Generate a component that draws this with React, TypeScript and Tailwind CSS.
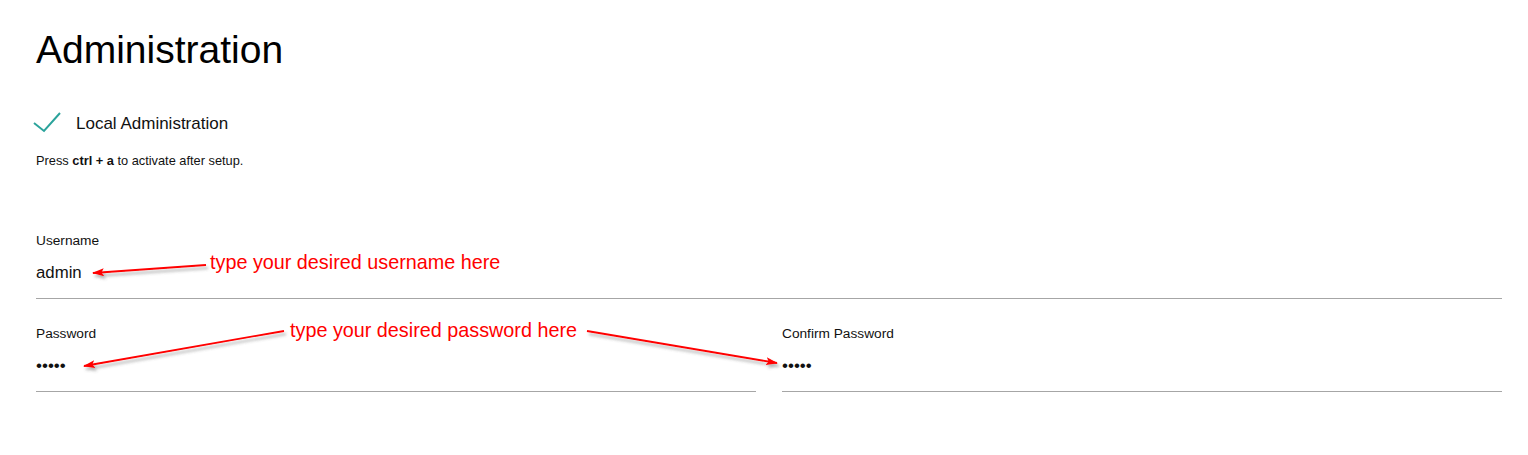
import React from "react";

type FieldProps = {
  label: string;
  value: string;
  secret?: boolean;
};

const Field = ({ label, value, secret }: FieldProps) => (
  <div className="border-b border-[#a6a6a6] pb-[13px]">
    <div className="text-[13.7px] leading-[18px] text-[#111]">{label}</div>
    <div
      className={`mt-[11px] h-[24px] leading-[24px] text-[#111] ${
        secret ? "text-[17px]" : "text-[16.8px]"
      }`}
    >
      {secret ? "•".repeat(value.length) : value}
    </div>
  </div>
);

// red annotation arrows drawn over the form
const Arrows = () => (
  <svg
    className="pointer-events-none absolute inset-0"
    width="1528"
    height="455"
    viewBox="0 0 1528 455"
  >
    <defs>
      <filter id="shadow" x="-20%" y="-50%" width="140%" height="200%">
        <feDropShadow dx="2" dy="3" stdDeviation="1.4" floodColor="#555" floodOpacity="0.45" />
      </filter>
      <marker
        id="head"
        viewBox="0 0 12 8"
        refX="11"
        refY="4"
        markerWidth="12"
        markerHeight="8"
        markerUnits="userSpaceOnUse"
        orient="auto"
      >
        <path d="M0 0 L12 4 L0 8 L2.5 4 Z" fill="#ff0000" />
      </marker>
    </defs>
    <g filter="url(#shadow)" stroke="#ff0000" strokeWidth="1.8" fill="none">
      <line x1="206" y1="265" x2="93" y2="273" markerEnd="url(#head)" />
      <line x1="284" y1="331" x2="84" y2="366" markerEnd="url(#head)" />
      <line x1="587" y1="331" x2="777" y2="363" markerEnd="url(#head)" />
    </g>
  </svg>
);

export default function App() {
  return (
    <main
      className="relative min-h-screen w-full bg-white pl-[36px] pr-[26px] pt-[27px] text-black"
      style={{ fontFamily: '"Liberation Sans", Arial, sans-serif' }}
    >
      {/* Title */}
      <h1 className="text-[39px] font-normal leading-[45px]">Administration</h1>

      {/* Local admin toggle */}
      <div className="mt-[40px] flex h-[24px] items-center">
        <svg className="-ml-[3px]" width="30" height="24" viewBox="0 0 30 24">
          <polyline
            points="1,11 11,19 27,1"
            fill="none"
            stroke="#2ba39b"
            strokeWidth="2"
          />
        </svg>
        <span className="ml-[13px] text-[17px] leading-[24px] text-[#111]">
          Local Administration
        </span>
      </div>

      <p className="mt-[16px] text-[12.8px] leading-[18px] text-[#111]">
        Press <b>ctrl + a</b> to activate after setup.
      </p>

      {/* Credentials */}
      <section className="mt-[62px] flex flex-col gap-[26px]">
        <Field label="Username" value="admin" />
        <div className="grid grid-cols-2 gap-[26px]">
          <Field label="Password" value="admin" secret />
          <Field label="Confirm Password" value="admin" secret />
        </div>
      </section>

      {/* Annotations */}
      <span className="absolute left-[210px] top-[250px] text-[19.8px] leading-[24px] text-[#ff0000]">
        type your desired username here
      </span>
      <span className="absolute left-[290px] top-[318px] text-[19.8px] leading-[24px] text-[#ff0000]">
        type your desired password here
      </span>
      <Arrows />
    </main>
  );
}
